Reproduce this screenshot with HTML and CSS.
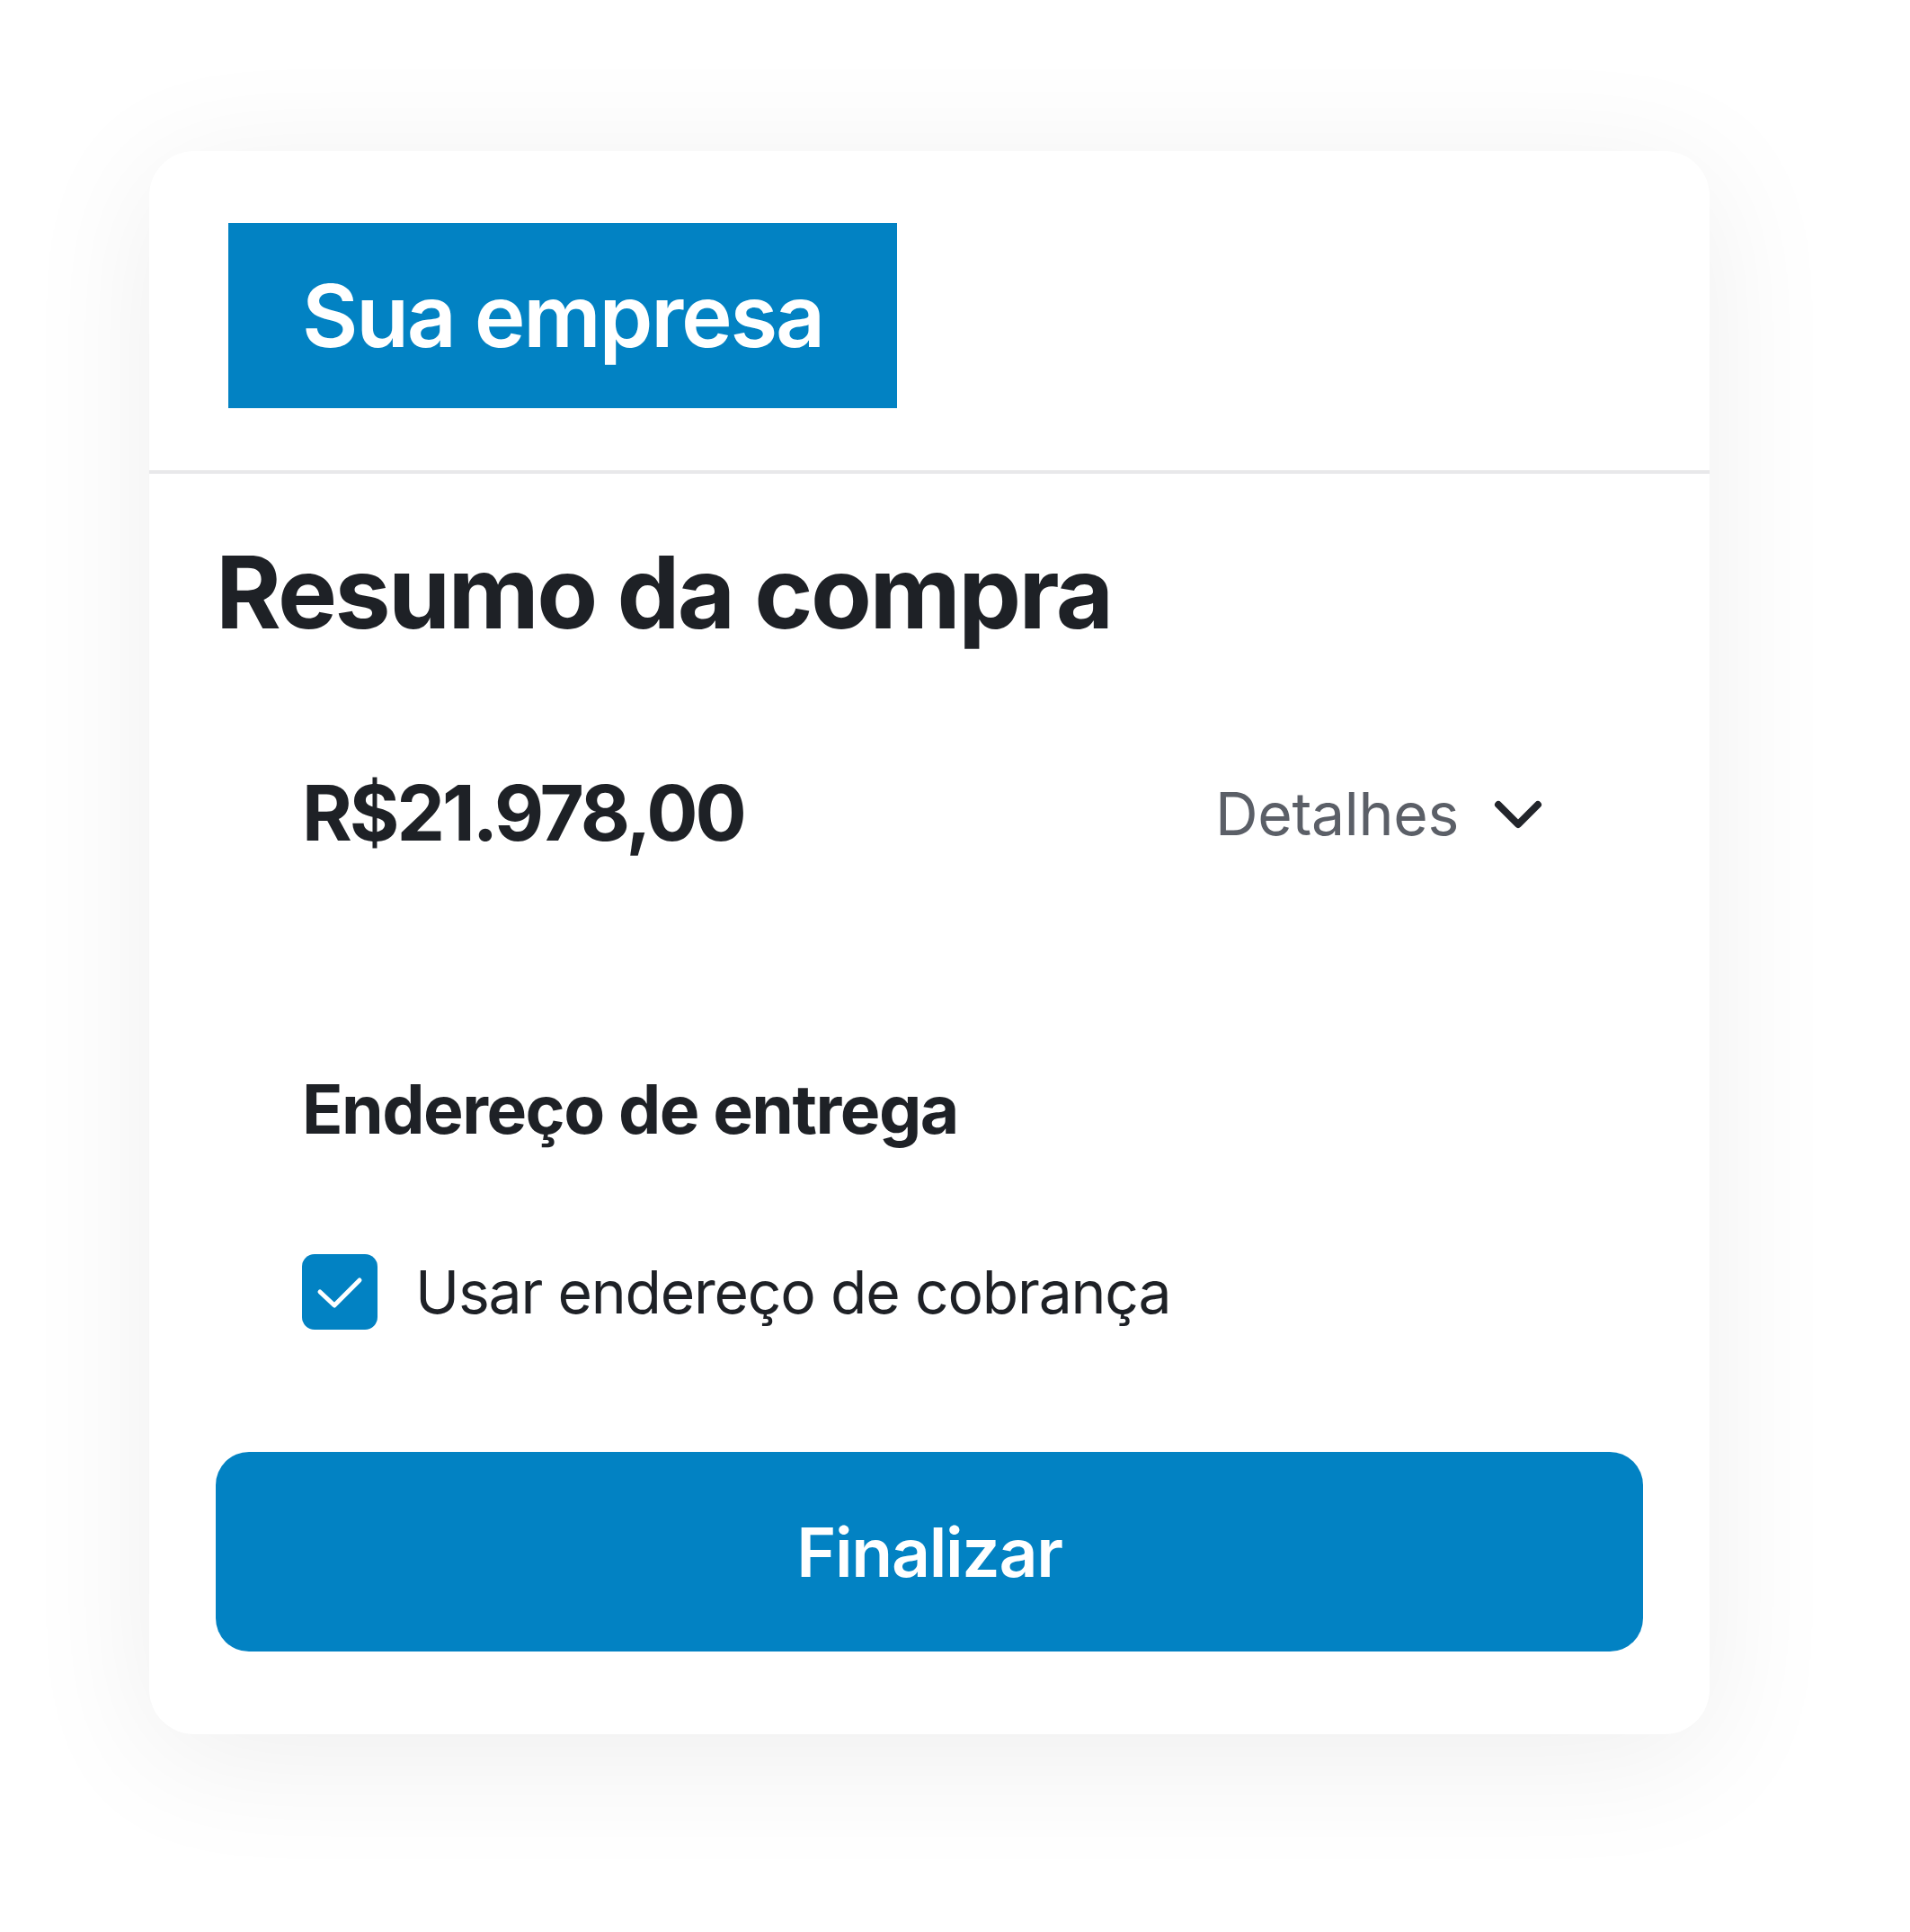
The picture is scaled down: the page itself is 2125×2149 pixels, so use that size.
FILE: index.html
```html
<!DOCTYPE html>
<html lang="pt">
<head>
  <meta charset="UTF-8">
  <meta name="viewport" content="width=device-width, initial-scale=1.0">
  <title>Resumo da compra</title>
  <link rel="stylesheet" href="styles.css">
</head>
<body>
  <div class="page">
    <div class="checkout-card">
      <div class="card-header">
        <div class="brand-logo">Sua empresa</div>
      </div>
      <div class="card-body">
        <h1 class="summary-title">Resumo da compra</h1>
        <div class="summary-row">
          <div class="total-price">R$21.978,00</div>
          <button class="details-toggle">
            <span>Detalhes</span>
            <svg class="chevron" width="60" height="40" viewBox="0 0 60 40">
              <path d="M8 10 L30 32 L52 10" fill="none" stroke="#22252b" stroke-width="8" stroke-linecap="round" stroke-linejoin="round"/>
            </svg>
          </button>
        </div>
        <h2 class="section-title">Endereço de entrega</h2>
        <label class="check-row">
          <span class="check-box">
            <svg width="84" height="84" viewBox="0 0 84 84">
              <path d="M20 42 L36 57 L64 29" fill="none" stroke="#fff" stroke-width="5" stroke-linecap="round" stroke-linejoin="round"/>
            </svg>
          </span>
          <span class="check-label">Usar endereço de cobrança</span>
        </label>
        <button class="finish-btn">Finalizar</button>
      </div>
    </div>
  </div>
</body>
</html>
```

FILE: styles.css
```css
* {
  box-sizing: border-box;
}
body {
  margin: 0;
  background: #fff;
  font-family: Inter, "Noto Sans", sans-serif;
  color: #1e2126;
}
.page {
  padding: 168px 0 200px 166px;
}
.checkout-card {
  width: 1736px;
  background: #fff;
  border-radius: 50px;
  box-shadow: 0 24px 150px rgba(0, 0, 0, 0.07);
}
.card-header {
  padding: 80px 88px 69px;
  border-bottom: 4px solid #e8e8ea;
}
.brand-logo {
  width: 744px;
  height: 206px;
  background: #0282c3;
  color: #fff;
  font-size: 96px;
  font-weight: 600;
  display: flex;
  align-items: center;
  justify-content: center;
  letter-spacing: -2.2px;
}
.card-body {
  padding: 65px 74px 92px;
}
.summary-title {
  margin: 0;
  font-size: 111px;
  line-height: 1.2;
  font-weight: 700;
  letter-spacing: -2.6px;
}
.summary-row {
  margin: 129px 96px 0;
  display: flex;
  justify-content: space-between;
  align-items: center;
  height: 102px;
}
.total-price {
  font-size: 85px;
  line-height: 1.2;
  font-weight: 700;
  letter-spacing: -3px;
}
.details-toggle {
  display: flex;
  align-items: center;
  gap: 36px;
  background: none;
  border: none;
  padding: 0;
  margin-right: 13px;
  font-family: inherit;
  font-size: 66px;
  letter-spacing: -0.3px;
  color: #5b5f67;
  cursor: pointer;
}
.section-title {
  margin: 233px 96px 0;
  font-size: 75px;
  line-height: 1.2;
  font-weight: 700;
  letter-spacing: -1.5px;
}
.check-row {
  margin: 116px 96px 0;
  display: flex;
  align-items: center;
  gap: 42px;
}
.check-box {
  width: 84px;
  height: 84px;
  border-radius: 14px;
  background: #0282c3;
  display: block;
}
.check-box svg {
  display: block;
}
.check-label {
  font-size: 66px;
  line-height: 1.2;
  letter-spacing: -1.2px;
  color: #1e2126;
}
.finish-btn {
  display: block;
  width: 100%;
  height: 222px;
  margin-top: 136px;
  border: none;
  border-radius: 37px;
  background: #0282c3;
  color: #fff;
  font-family: inherit;
  font-size: 75px;
  font-weight: 600;
  letter-spacing: -1.3px;
  cursor: pointer;
}
```
